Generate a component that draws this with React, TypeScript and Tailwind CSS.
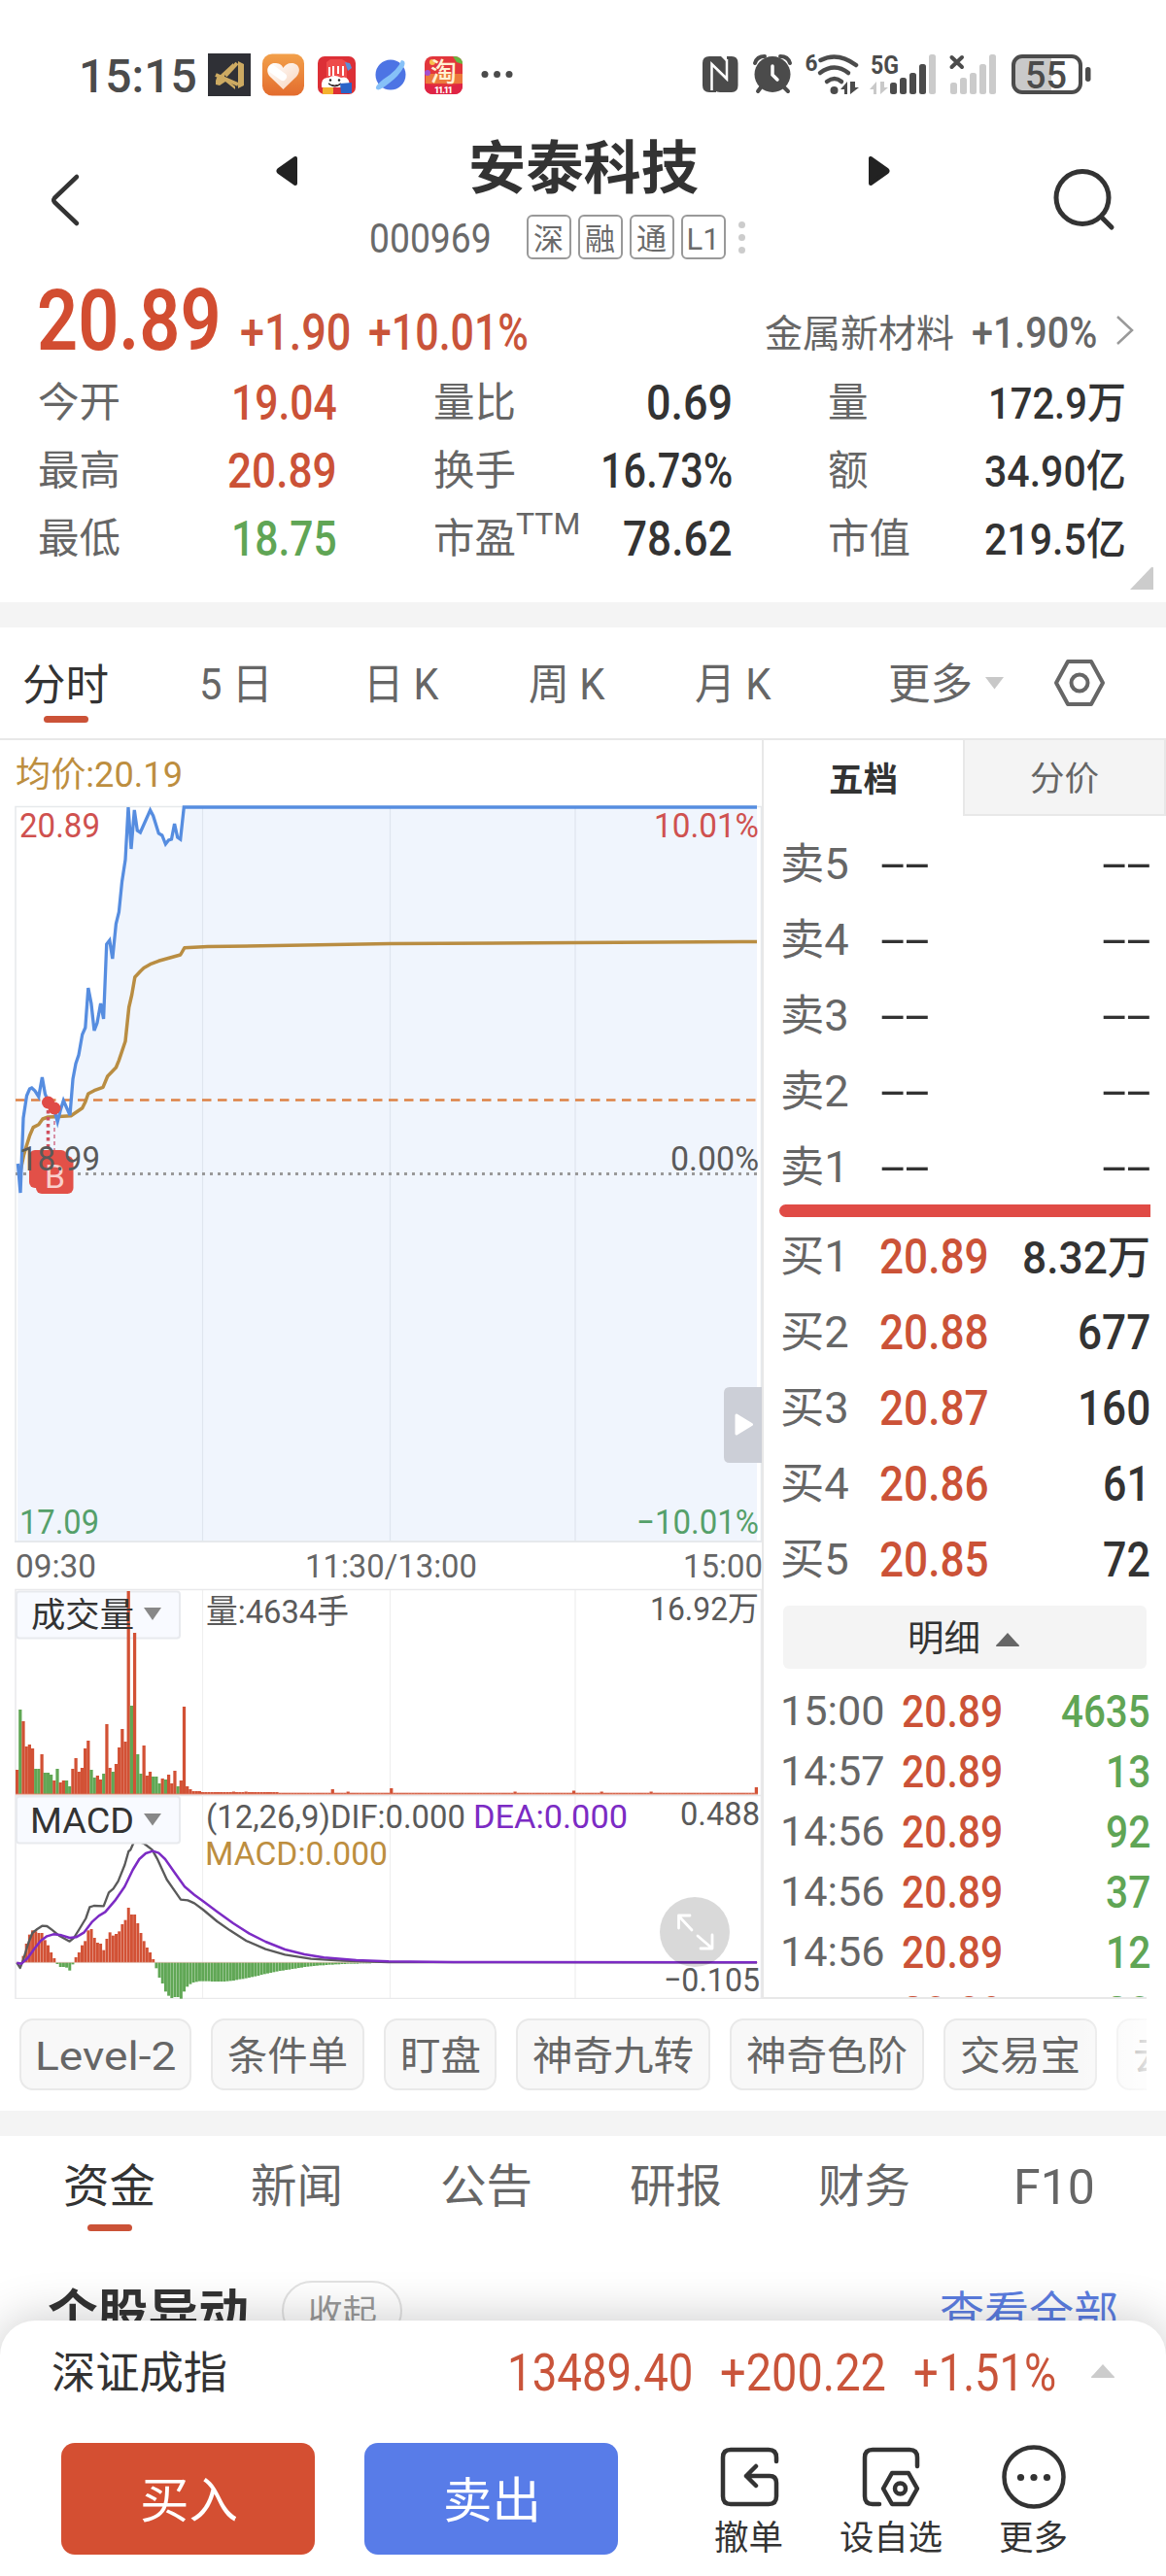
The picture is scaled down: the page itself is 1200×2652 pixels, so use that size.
import { useLayoutEffect, useRef } from 'react'
import type { ReactNode } from 'react'
import clsx from 'clsx'

type Bar = { h: number; up: boolean }

// Text squeezed or stretched to the width of its own box
function Fit({ className, children }: { className: string; children: ReactNode }) {
  const outer = useRef<HTMLSpanElement>(null)
  const inner = useRef<HTMLSpanElement>(null)

  useLayoutEffect(() => {
    if (!outer.current || !inner.current) return
    const ratio = outer.current.offsetWidth / inner.current.offsetWidth
    inner.current.style.transform = `translateY(1.5px) scaleX(${ratio})`
  }, [children])

  return (
    <span ref={outer} className={clsx('block shrink-0 whitespace-nowrap leading-none', className)}>
      <span ref={inner} className="inline-block origin-left leading-none">
        {children}
      </span>
    </span>
  )
}

const marketTags = [
  { label: '深', width: 'w-[31px]' },
  { label: '融', width: 'w-[31px]' },
  { label: '通', width: 'w-[31px]' },
  { label: 'L1', width: 'w-[34px]' },
]

const asks = ['卖5', '卖4', '卖3', '卖2', '卖1']

const bids = [
  { label: '买1', price: '20.89', qty: '8.32万', width: 'w-[132px]' },
  { label: '买2', price: '20.88', qty: '677', width: 'w-[75px]' },
  { label: '买3', price: '20.87', qty: '160', width: 'w-[75px]' },
  { label: '买4', price: '20.86', qty: '61', width: 'w-[49px]' },
  { label: '买5', price: '20.85', qty: '72', width: 'w-[49px]' },
]

const ticks = [
  { time: '15:00', price: '20.89', qty: '4635', width: 'w-[92px]' },
  { time: '14:57', price: '20.89', qty: '13', width: 'w-[46px]' },
  { time: '14:56', price: '20.89', qty: '92', width: 'w-[46px]' },
  { time: '14:56', price: '20.89', qty: '37', width: 'w-[46px]' },
  { time: '14:56', price: '20.89', qty: '12', width: 'w-[46px]' },
  { time: '14:56', price: '20.89', qty: '20', width: 'w-[46px]' },
]

const chips = [
  { label: 'Level-2', box: 'w-[177px]', text: 'w-[145px]' },
  { label: '条件单', box: 'w-[158px]', text: 'w-[124px]' },
  { label: '盯盘', box: 'w-[116px]', text: 'w-[83px]' },
  { label: '神奇九转', box: 'w-[200px]', text: 'w-[166px]' },
  { label: '神奇色阶', box: 'w-[200px]', text: 'w-[166px]' },
  { label: '交易宝', box: 'w-[158px]', text: 'w-[124px]' },
  { label: '云参数', box: 'w-[158px]', text: 'w-[124px]' },
]

const pricePoints =
  '18.4,1198 21,1228 24,1151 27.5,1128 30.5,1121 32.7,1120 36,1123 39.8,1129 43.4,1109 46.4,1126 49.5,1134 53,1141 56,1143 59.2,1155 62.2,1143 65.3,1133 68.4,1140 72,1148 75,1111 78,1095 81,1086 84.7,1065 87.8,1058 90.8,1017 93.9,1033 97,1061 100,1053 103.6,1033 106.6,1049 109.7,972 112.8,968 115.8,987 119.4,951 122.4,939 125.5,908 129,885 132,831 135,874 138.3,834 141.3,855 144.4,857 154.6,834 157.7,840 163.3,858 166.8,860 170.4,869 173.5,865 176.5,864 179.6,848 182.7,862 185.7,864 189.3,831 779,831'

const averagePoints =
  '21,1206 24.5,1189 27.5,1179 30.6,1169 34.2,1160.6 39.8,1157.7 43.9,1152 49.5,1150 56,1149.7 73,1148.8 84.7,1140.8 87.8,1134.5 90.8,1126 97,1122.7 106,1119.4 110.7,1108 119.4,1099 122.4,1091.6 129,1072 132.7,1037 135.7,1024 138.8,1006 144.4,1000 148,996.5 154.6,992.7 163.3,989.3 185.7,983 189.8,975.8 214,974.6 401.5,971.6 592,970.4 779,969.5'

const difPoints =
  '52,722 62,738 72,712 88,660 100,630 115,618 130,608 145,609 160,620 185,640 215,656 228,645 245,618 265,585 277,550 290,546 320,547 336,505 350,493 365,470 385,420 397,378 403,373 413,350 425,347 445,354 470,373 485,400 515,465 545,508 558,527 580,529 600,538 627,558 670,594 710,622 760,654 820,680 880,697 960,710 1060,716 1200,720 2337,721'

const deaPoints =
  '52,722 66,725 85,708 105,680 125,655 145,640 165,634 190,637 215,645 235,643 260,628 285,595 305,577 325,565 355,530 385,487 410,435 430,402 450,384 472,377 490,383 510,402 540,445 570,487 600,512 627,532 670,564 720,600 770,632 820,657 880,681 940,696 1000,706 1100,714 1200,718 1400,720 2337,721'

// Minute volumes, "-" marks a falling minute
const volumes = [
  25, -87, 75, 49, 51, 47, -26, -26, 41, -22, -22, -20, 14, -26, 12, 14, -14, -8, 26, 37, 23, 27, 47, 55, -25, -17, 19,
  15, -21, 72, 27, -23, 31, 48, 67, 54, 209, -91, 166, -41, -21, 50, 19, 23, -18, -18, -11, 16, -15, 20, 11, 24, -8, 14,
  90, 8, 5, 3, 3, 3,
]
const volumeSpikes: Record<number, number> = { 70: 2.5, 74: 2.5, 102: 5, 107: 2.5, 121: 6, 161: 2.5, 180: 3.5, 189: 2.5, 205: 2.5, 239: 7 }

const volumeBars: Bar[] = Array.from({ length: 240 }, (_, i) => {
  const v = volumes[i] ?? volumeSpikes[i] ?? (i < 85 ? 2 : 1.3)
  return { h: Math.abs(v), up: v > 0 }
})

const macdBars = [
  0, -5, 20, 58, 86, 99, 96, 91, 91, 69, 53, 31, 13, -5, -14, -14, -16, -25, -6, 16, 31, 53, 66, 99, 103, 76, 61, 58, 38,
  73, 93, 83, 88, 96, 118, 131, 169, 148, 148, 121, 91, 66, 46, 31, 10, -18, -47, -65, -90, -103, -110, -107, -107, -112,
  -90, -75, -67, -62, -60, -58, -58, -58, -58, -59, -59, -59, -59, -59, -58, -57, -56, -54, -52, -51, -49, -47, -45, -43,
  -41, -38, -36, -34, -32, -30, -28, -26, -25, -23, -22, -20, -19, -17, -16, -14, -13, -12, -11, -10, -9, -9, -8, -7, -7,
  -6, -6, -5, -5, -4, -4, -4, -4, -3, -3, -3, -3, -2, -2, -2, -2,
]

type LabelProps = { x: number; y: number; w: number; size?: number; fill?: string; children: string }

// y is the middle of the capitals
function Label({ x, y, w, size = 34, fill = '#5a5a5a', children }: LabelProps) {
  return (
    <text x={x} y={y + size * 0.355} fontSize={size} fill={fill} textLength={w} lengthAdjust="spacingAndGlyphs">
      {children}
    </text>
  )
}

function StatusBar() {
  return (
    <div className="flex h-[110px] items-center pt-11 text-[#4b4b4b]">
      <Fit className="ml-[81px] w-[122px] text-[48px] font-medium">15:15</Fit>
      <svg className="ml-[11px] shrink-0" width="318" height="48" viewBox="214 53 318 48">
        <defs>
          <linearGradient id="heartBg" x1="0" y1="0" x2="0" y2="1">
            <stop offset="0" stopColor="#f2a04a" />
            <stop offset="1" stopColor="#e36c2e" />
          </linearGradient>
          <linearGradient id="heart" x1="0" y1="0" x2="1" y2="1">
            <stop offset="0" stopColor="#fff" />
            <stop offset="1" stopColor="#f8d3bb" />
          </linearGradient>
        </defs>
        <rect x="214" y="55" width="44" height="44" fill="#2f3036" />
        <path d="M223 80 L227 77 L240 65 L240 68 L231 77 L231 80 L237 85 L242 89 L242 92 L232 84 L226 88 L222 87 L222 83 Z" fill="#cdaa62" />
        <path d="M245 63 L251 66 V88 L245 91 Z" fill="#cdaa62" />
        <path d="M222 77 L245 87" stroke="#cdaa62" strokeWidth="4" />
        <path d="M232 78 L244 65" stroke="#cdaa62" strokeWidth="4" />
        <rect x="270" y="55.5" width="43" height="43" rx="10" fill="url(#heartBg)" />
        <path d="M291.500 92 L278 79 C272 72 277 64 284 65 C288 65 291 68 291.500 70 C293 67 296 65 300 65 C307 65 311 72 305 79 Z" fill="url(#heart)" />
        <path d="M280 71 L291 79" stroke="#fff" strokeWidth="8" strokeLinecap="round" />
        <rect x="327" y="58" width="39" height="39" rx="7" fill="#dc2f36" />
        <path d="M336 64 L340 61 H352 L357 64 V82 H336 Z" fill="#ee4b4b" />
        <path d="M339 69 V78 M343 68 V78 M348 68 V76 M353 68 V78" stroke="#fff" strokeWidth="2" />
        <path d="M331 90 Q330 79 338 80 Q344 76 351 80 Q360 77 360 90 Z" fill="#fff" />
        <path d="M338 86 Q344 90 351 86 Q345 92 338 86" fill="#e23" stroke="#222" strokeWidth="1" />
        <circle cx="340" cy="82.500" r="1.200" fill="#222" />
        <circle cx="349" cy="82.500" r="1.200" fill="#222" />
        <rect x="332" y="90" width="11" height="7" rx="1" fill="#f4b22f" />
        <path d="M350 86 L362 85 V96 H351 Z" fill="#2a64c8" />
        <path d="M355 64 l5 1 2 5 -4 3 z" fill="#5a8fd8" />
        <circle cx="402" cy="77" r="15.500" fill="#4d74e4" />
        <path d="M388 92 Q384 90 394 82 Q410 72 413 62 Q418 62 416 68 Q411 78 400 86 Q390 94 388 92" fill="#86c1f8" />
        <rect x="437" y="58" width="39" height="39" rx="8" fill="#e2363c" />
        <path d="M438 76 H476 V86 H438 Z" fill="#ec7a3c" />
        <path d="M437 86 Q456 92 476 86 V90 Q474 97 468 97 H446 Q438 97 437 90 Z" fill="#df2445" />
        <path d="M466 58 Q476 58 476 66 L470 64 Z" fill="#66b840" />
        <circle cx="440" cy="75" r="3" fill="#a44fd0" />
        <circle cx="445" cy="64" r="3" fill="#f8bf4c" />
        <text x="443" y="84" fontSize="27" fontWeight="500" fill="#fff1d4">
          淘
        </text>
        <text x="447" y="95.500" fontSize="9" fontWeight="900" fill="#fff" textLength="19">
          11.11
        </text>
        <g fill="#4b4b4b">
          <circle cx="499" cy="76.500" r="3.500" />
          <circle cx="511.500" cy="76.500" r="3.500" />
          <circle cx="524" cy="76.500" r="3.500" />
        </g>
      </svg>
      <svg className="ml-[188px] shrink-0" width="404" height="48" viewBox="720 53 404 48" fill="#4b4b4b">
        {/* nfc */}
        <path d="M730 58 H742 L753 69 V87 L737 73 V95 H730 Q723 95 723 88 V65 Q723 58 730 58 Z" />
        <path d="M748 58 H753 Q759.500 58 759.500 65 V88 Q759.500 95 753 95 H741 Q734 95 734 87 L734 70 L749 84 Z" />
        <path d="M732.500 93 V66 L748 81 V61" fill="none" stroke="#fff" strokeWidth="2.500" />
        {/* alarm */}
        <circle cx="795" cy="76.500" r="18.500" />
        <path d="M777 65 Q779 58 787 58" fill="none" stroke="#4b4b4b" strokeWidth="4" strokeLinecap="round" />
        <path d="M803 58 Q811 58 813 65" fill="none" stroke="#4b4b4b" strokeWidth="4" strokeLinecap="round" />
        <path d="M783 90 L780 94 M807 90 L811 94" stroke="#4b4b4b" strokeWidth="4" strokeLinecap="round" />
        <path d="M795 68 V77 L800 82" fill="none" stroke="#fff" strokeWidth="3.500" strokeLinecap="round" />
        {/* wifi */}
        <text x="828.500" y="72.500" fontSize="24" fontWeight="700" textLength="13" lengthAdjust="spacingAndGlyphs">
          6
        </text>
        <g fill="none" stroke="#4b4b4b" strokeWidth="4.500" strokeLinecap="round">
          <path d="M844.500 62 Q862 53 881 67" />
          <path d="M844 75 Q859 64 873 75" />
          <path d="M851 84 Q859 78 866 84" />
        </g>
        <circle cx="858.500" cy="93" r="4" />
        <path d="M872 97 V84 L865 92 H869 V97 Z M875 84 V97 L884 90 H880 V84 Z" />
        {/* signals */}
        <text x="896" y="76" fontSize="26" fontWeight="700" textLength="29" lengthAdjust="spacingAndGlyphs">
          5G
        </text>
        <path d="M902 97 V84 L895 92 H899 V97 Z M906 84 V97 L914 90 H910 V84 Z" fill="#c9c9c9" />
        <rect x="916" y="85" width="7" height="12" rx="2.500" />
        <rect x="926" y="80" width="7" height="17" rx="2.500" />
        <rect x="936" y="75" width="7" height="22" rx="2.500" />
        <rect x="946" y="66" width="7" height="31" rx="2.500" />
        <g fill="#cbcbcb">
          <rect x="956" y="56" width="7" height="41" rx="2.500" />
          <rect x="978" y="85" width="7" height="12" rx="2.500" />
          <rect x="988" y="80" width="7" height="17" rx="2.500" />
          <rect x="998" y="75" width="7" height="22" rx="2.500" />
          <rect x="1008" y="66" width="7" height="31" rx="2.500" />
          <rect x="1018" y="56" width="7" height="41" rx="2.500" />
        </g>
        <path d="M979.500 59 L990 69 M990 59 L979.500 69" stroke="#4b4b4b" strokeWidth="4" strokeLinecap="round" />
        {/* battery */}
        <path d="M1052 58 H1082 V95 H1052 Q1043 95 1043 87 V66 Q1043 58 1052 58" fill="#c9c9c9" />
        <rect x="1043" y="58" width="69" height="37" rx="9" fill="none" stroke="#4b4b4b" strokeWidth="4" />
        <text x="1055" y="91" fontSize="38" fontWeight="500" textLength="43" lengthAdjust="spacingAndGlyphs">
          55
        </text>
        <rect x="1117" y="69" width="5.500" height="15" rx="2.700" />
      </svg>
    </div>
  )
}

function Header() {
  return (
    <header className="flex h-[170px] text-[#333]">
      <svg className="mt-[66px] ml-[48px] shrink-0" width="40" height="60" fill="none" stroke="#333" strokeWidth="4.500" strokeLinecap="round" strokeLinejoin="round">
        <path d="M31 6 L8 28 Q6.500 30 8 32 L31 54" />
      </svg>
      <div className="flex flex-1 flex-col items-center">
        <div className="mt-[32px] ml-[32px] flex items-center">
          <svg className="mt-2 shrink-0" width="24" height="30">
            <path d="M20 2 V28 L3 16 Q2 15 3 14 Z" fill="#222" stroke="#222" strokeWidth="4" strokeLinejoin="round" />
          </svg>
          <Fit className="mr-[173px] ml-[174px] w-[237px] text-[59px] font-bold">安泰科技</Fit>
          <svg className="mt-2 shrink-0" width="24" height="30">
            <path d="M4 2 V28 L21 16 Q22 15 21 14 Z" fill="#222" stroke="#222" strokeWidth="4" strokeLinejoin="round" />
          </svg>
        </div>
        <div className="mt-[20px] ml-[-22px] flex items-center gap-[7px] text-[#6a6a6a]">
          <Fit className="mr-[29px] w-[126px] text-[42px]">000969</Fit>
          {marketTags.map((tag) => (
            <span key={tag.label} className="flex size-[46px] items-center justify-center rounded-md border-2 border-[#999] text-[31px]">
              <Fit className={tag.width}>{tag.label}</Fit>
            </span>
          ))}
          <span className="ml-[6px] flex flex-col gap-[6px]">
            <i className="size-[7px] rounded-full bg-[#ccc]" />
            <i className="size-[7px] rounded-full bg-[#ccc]" />
            <i className="size-[7px] rounded-full bg-[#ccc]" />
          </span>
        </div>
      </div>
      <svg className="mt-[60px] mr-[48px] shrink-0" width="72" height="70" fill="none" stroke="#333" strokeWidth="5" strokeLinecap="round">
        <circle cx="34" cy="33.500" r="27" />
        <path d="M54 54 L64 64" />
      </svg>
    </header>
  )
}

function Quote() {
  return (
    <section className="relative h-[340px] text-[#666]">
      <div className="flex h-[96px] items-center">
        <Fit className="ml-[38px] w-[190px] text-[87px] font-semibold text-[#d24d31]">20.89</Fit>
        <Fit className="mt-6 ml-[19px] w-[114px] text-[51px] font-medium text-[#c9543a]">+1.90</Fit>
        <Fit className="mt-6 ml-[18px] w-[165px] text-[51px] font-medium text-[#c9543a]">+10.01%</Fit>
        <Fit className="mt-7 ml-auto w-[195px] text-[39px]">金属新材料</Fit>
        <Fit className="mt-6 ml-[18px] w-[129px] text-[45px] font-medium">+1.90%</Fit>
        <svg className="mt-6 mr-[30px] ml-[17px] shrink-0" width="24" height="36" fill="none" stroke="#999" strokeWidth="2.500">
          <path d="M4 4 L19 18 L4 32" />
        </svg>
      </div>
      <div className="mt-0.5 flex flex-col pl-[39px] text-[42.500px]">
        <div className="flex h-[70px] items-center">
          <Fit className="w-[85px]">今开</Fit>
          <Fit className="ml-[114px] w-[109px] text-[50px] font-medium text-[#cb5237]">19.04</Fit>
          <Fit className="ml-[99px] w-[85px]">量比</Fit>
          <Fit className="ml-[134px] w-[89px] text-[50px] font-medium text-[#333]">0.69</Fit>
          <Fit className="ml-[98px] w-[42px]">量</Fit>
          <Fit className="ml-[123px] w-[142px] text-[45px] font-medium text-[#333]">172.9万</Fit>
        </div>
        <div className="flex h-[70px] items-center">
          <Fit className="w-[85px]">最高</Fit>
          <Fit className="ml-[110px] w-[113px] text-[50px] font-medium text-[#cb5237]">20.89</Fit>
          <Fit className="ml-[99px] w-[85px]">换手</Fit>
          <Fit className="ml-[87px] w-[136px] text-[50px] font-medium text-[#333]">16.73%</Fit>
          <Fit className="ml-[98px] w-[42px]">额</Fit>
          <Fit className="ml-[119px] w-[146px] text-[45px] font-medium text-[#333]">34.90亿</Fit>
        </div>
        <div className="flex h-[70px] items-center">
          <Fit className="w-[85px]">最低</Fit>
          <Fit className="ml-[114px] w-[109px] text-[50px] font-medium text-[#60a555]">18.75</Fit>
          <Fit className="ml-[99px] w-[85px]">市盈</Fit>
          <Fit className="mb-8 w-[66px] text-[32px]">TTM</Fit>
          <Fit className="ml-[44px] w-[113px] text-[50px] font-medium text-[#333]">78.62</Fit>
          <Fit className="ml-[98px] w-[85px]">市值</Fit>
          <Fit className="ml-[76px] w-[146px] text-[45px] font-medium text-[#333]">219.5亿</Fit>
        </div>
      </div>
      <svg className="absolute right-[13px] bottom-[13px]" width="24" height="24">
        <path d="M0 24 L22 1 Q24 0 24 2 V24 Z" fill="#ccc" />
      </svg>
    </section>
  )
}

function PeriodTabs() {
  return (
    <nav className="flex h-[116px] items-center border-b-2 border-[#e8e8e8] text-[44px] text-[#666]">
      <div className="ml-[23px] flex h-full flex-col items-center pt-[36px] text-[#333]">
        <Fit className="w-[89px]">分时</Fit>
        <i className="mt-[11px] h-[7px] w-[46px] rounded-full bg-[#cb5237]" />
      </div>
      <Fit className="ml-[93px] w-[76px]">5 日</Fit>
      <Fit className="ml-[93px] w-[78px]">日 K</Fit>
      <Fit className="ml-[92px] w-[79px]">周 K</Fit>
      <Fit className="ml-[92px] w-[79px]">月 K</Fit>
      <Fit className="ml-[120px] w-[87px]">更多</Fit>
      <svg className="ml-[13px] shrink-0" width="20" height="13">
        <path d="M0 0 H19 L9.500 12.500 Z" fill="#c8c8c8" />
      </svg>
      <svg className="ml-[50px] shrink-0" width="54" height="50" fill="none" stroke="#666" strokeWidth="4" strokeLinejoin="round">
        <path d="M15 3 H39 L51 25 L39 47 H15 L3 25 Z" />
        <circle cx="27" cy="25" r="8.500" />
      </svg>
    </nav>
  )
}

function Charts() {
  const step = 3.183
  return (
    <svg className="shrink-0" width="784" height="1296" viewBox="0 762 784 1296">
      {/* intraday price */}
      <Label x={16} y={797} w={172} size={36} fill="#bd8e3f">
        均价:20.19
      </Label>
      <path d="M16 1587 V830.500 H783.500 V1587" fill="none" stroke="#e6e9ec" strokeWidth="1.500" />
      <polygon points={`18,1586 ${pricePoints} 779,1586`} fill="#f0f5fd" />
      <path d="M208.500 831 V1587 M401.500 831 V1587 M592 831 V1587" stroke="#dfe5ee" strokeWidth="1.200" />
      <path d="M15 1587 H784" stroke="#e6e9ec" strokeWidth="2" />
      <path d="M16 1208.500 H784" stroke="#999" strokeWidth="3" strokeDasharray="3 5" />
      <path d="M16 1132.500 H784" stroke="#dd8144" strokeWidth="2.500" strokeDasharray="9.500 6.500" />
      <polyline points={averagePoints} fill="none" stroke="#b98d42" strokeWidth="3.500" strokeLinejoin="round" />
      <polyline points={pricePoints} fill="none" stroke="#568de0" strokeWidth="3.300" />
      <Label x={20} y={850} w={83} size={35} fill="#cf514f">
        20.89
      </Label>
      <Label x={673} y={850} w={108} size={35} fill="#cf514f">
        10.01%
      </Label>
      <Label x={690} y={1193} w={91} size={35}>
        0.00%
      </Label>
      <Label x={20} y={1567} w={82} size={35} fill="#55a06a">
        17.09
      </Label>
      <Label x={655} y={1567} w={126} size={35} fill="#55a06a">
        −10.01%
      </Label>
      {/* trade markers */}
      <path d="M49.500 1143 V1184" stroke="#d0505f" strokeWidth="3.500" strokeDasharray="3.500 3.500" />
      <path d="M56 1154 V1190" stroke="#d0708a" strokeWidth="1.500" strokeDasharray="4 3" />
      <circle cx="49.500" cy="1135" r="6.500" fill="#e04b46" />
      <circle cx="56" cy="1141" r="6.500" fill="#e04b46" />
      <rect x="30" y="1184" width="39" height="39" rx="6" fill="#e25048" />
      <rect x="37" y="1190" width="38.500" height="39" rx="6" fill="#e25048" />
      <Label x={46} y={1210.500} w={21} size={34} fill="#f9cfcc">
        B
      </Label>
      <Label x={20} y={1193} w={83} size={35}>
        18.99
      </Label>
      <path d="M784 1428 H751 Q745 1428 745 1434 V1500 Q745 1506 751 1506 H784 Z" fill="#cccfd7" />
      <path d="M758 1457 V1476 L773.500 1466.500 Z" fill="#fff" stroke="#fff" strokeWidth="3" strokeLinejoin="round" />
      <Label x={16} y={1612} w={83} fill="#666">
        09:30
      </Label>
      <Label x={314} y={1612} w={177} fill="#666">
        11:30/13:00
      </Label>
      <Label x={703} y={1612} w={82} fill="#666">
        15:00
      </Label>

      {/* panel frames */}
      <path d="M16 1636.500 H783.500 V2057.500 H16 Z M16 1848.500 H784" fill="none" stroke="#e9e9eb" strokeWidth="1.500" />
      <path d="M208.500 1637 V2057 M401.500 1637 V2057 M592 1637 V2057" stroke="#efefef" strokeWidth="1.200" />
      <rect x="17" y="1638.500" width="168" height="48" rx="3" fill="#f8faff" stroke="#e8eaee" strokeWidth="2" />

      {/* volume */}
      {volumeBars.map((bar, i) => (
        <rect key={i} x={16 + i * step} y={1847 - bar.h} width={3.25} height={bar.h} fill={bar.up ? '#d25135' : '#60a755'} />
      ))}
      <path d="M16 1847 H780" stroke="#dd8069" strokeWidth="1" />
      <Label x={32} y={1663} w={106} size={35} fill="#333">
        成交量
      </Label>
      <path d="M148 1655 H166 L157 1668 Z" fill="#888" />
      <Label x={212} y={1659} w={147}>
        量:4634手
      </Label>
      <Label x={669} y={1656} w={112}>
        16.92万
      </Label>

      {/* macd */}
      <g transform="translate(0 1780) scale(0.33333)">
        {macdBars.map((v, i) => (
          <rect key={i} x={48.5 + i * 9.55} y={v > 0 ? 721 - v : 721} width={8.9} height={Math.abs(v)} fill={v > 0 ? '#d25135' : '#60a755'} />
        ))}
        <path d="M48 721 H2340" stroke="#d9b0a0" strokeWidth="2" />
        <polyline points={difPoints} fill="none" stroke="#5a5a5a" strokeWidth="7" strokeLinejoin="round" />
        <polyline points={deaPoints} fill="none" stroke="#7c2bc4" strokeWidth="7.500" strokeLinejoin="round" />
      </g>
      <rect x="17" y="1849.500" width="168" height="48" rx="3" fill="#f8faff" stroke="#e8eaee" strokeWidth="2" />
      <Label x={31} y={1874} w={107} size={36} fill="#333">
        MACD
      </Label>
      <path d="M148 1867 H166 L157 1879.500 Z" fill="#888" />
      <Label x={212} y={1869.500} w={267}>
        (12,26,9)DIF:0.000
      </Label>
      <Label x={487} y={1869.500} w={159} fill="#7c2bc4">
        DEA:0.000
      </Label>
      <Label x={211} y={1908} w={188} fill="#bd8e3f">
        MACD:0.000
      </Label>
      <Label x={700} y={1867} w={82}>
        0.488
      </Label>
      <Label x={683} y={2038} w={99}>
        −0.105
      </Label>
      <circle cx="715" cy="1989" r="36" fill="#000" fillOpacity="0.150" />
      <g fill="none" stroke="#fff" strokeWidth="2.800" strokeLinecap="round" strokeLinejoin="round">
        <path d="M712 1987 L699 1973 M698.500 1985 V1972 H710" />
        <path d="M718 1993 L732 2005 M733 1992 V2006 H721" />
      </g>
    </svg>
  )
}

function OrderBook() {
  return (
    <aside className="flex w-[416px] flex-col overflow-hidden border-l-2 border-[#e8e8e8] text-[44px] text-[#666]">
      <div className="flex h-[78px] shrink-0 text-[35px]">
        <div className="flex w-[205px] items-center justify-center font-bold text-[#333]">
          <Fit className="w-[71px]">五档</Fit>
        </div>
        <div className="flex flex-1 items-center justify-center border-2 border-t-0 border-[#e8e8e8] bg-[#f4f4f4]">
          <Fit className="w-[71px]">分价</Fit>
        </div>
      </div>
      <div className="mt-[9px] flex flex-col">
        {asks.map((label) => (
          <div key={label} className="flex h-[78px] items-center">
            <Fit className="ml-[17px] w-[71px]">{label}</Fit>
            <Fit className="ml-[32px] w-[50px] text-[#333]">--</Fit>
            <Fit className="mr-[16px] ml-auto w-[50px] text-[#333]">--</Fit>
          </div>
        ))}
      </div>
      <div className="mt-px ml-[16px] h-[13px] w-[382px] shrink-0 rounded-l-full bg-[#e04b46]" />
      <div className="flex flex-col">
        {bids.map((bid) => (
          <div key={bid.label} className="flex h-[78px] items-center">
            <Fit className="ml-[17px] w-[71px]">{bid.label}</Fit>
            <Fit className="ml-[31px] w-[113px] text-[50px] font-medium text-[#cb5237]">{bid.price}</Fit>
            <Fit className={clsx('mr-[16px] ml-auto font-medium text-[#333]', bid.width, bid.qty.endsWith('万') ? 'text-[47px]' : 'text-[50px]')}>
              {bid.qty}
            </Fit>
          </div>
        ))}
      </div>
      <div className="mt-[10px] ml-[20px] flex h-[65px] w-[374px] shrink-0 items-center rounded-md bg-[#f4f4f4] pl-[128px] text-[#333]">
        <Fit className="w-[75px] text-[37px]">明细</Fit>
        <svg className="mt-1 ml-[16px]" width="24" height="14">
          <path d="M0 14 Q0 12 2 11 L12 0 L22 11 Q24 12 24 14 Z" fill="#666" />
        </svg>
      </div>
      <div className="flex h-[338px] shrink-0 flex-col overflow-hidden pt-[11px]">
        {ticks.map((tick, i) => (
          <div key={i} className="flex h-[62px] shrink-0 items-center">
            <Fit className="ml-[17px] w-[108px] text-[42px]">{tick.time}</Fit>
            <Fit className="ml-[17px] w-[104px] text-[46px] font-medium text-[#cb5237]">{tick.price}</Fit>
            <Fit className={clsx('mr-[16px] ml-auto text-[46px] font-medium text-[#60a555]', tick.width)}>{tick.qty}</Fit>
          </div>
        ))}
      </div>
      <div className="h-[2px] w-[394px] shrink-0 bg-[#e8e8e8]" />
    </aside>
  )
}

function Chips() {
  return (
    <div className="relative flex h-[115px] w-[1180px] gap-5 overflow-hidden pt-5 pl-5 text-[41px] text-[#666]">
      {chips.map((chip) => (
        <div key={chip.label} className={clsx('flex h-[74px] shrink-0 items-center justify-center rounded-[14px] border-2 border-[#e9e9e9] bg-[#f8f8f8]', chip.box)}>
          <Fit className={chip.text}>{chip.label}</Fit>
        </div>
      ))}
      <div className="absolute inset-y-0 right-0 w-[70px] bg-gradient-to-r from-white/0 to-white/80" />
    </div>
  )
}

function News() {
  return (
    <section className="flex-1 text-[#666]">
      <nav className="flex pt-[26px] text-[47px]">
        <div className="ml-[65px] flex flex-col items-center text-[#333]">
          <Fit className="w-[95px]">资金</Fit>
          <i className="mt-[18px] h-[7px] w-[46px] rounded-full bg-[#cb5237]" />
        </div>
        <Fit className="ml-[98px] w-[95px]">新闻</Fit>
        <Fit className="ml-[100px] w-[95px]">公告</Fit>
        <Fit className="ml-[100px] w-[95px]">研报</Fit>
        <Fit className="ml-[99px] w-[95px]">财务</Fit>
        <Fit className="ml-[106px] w-[84px] text-[50px]">F10</Fit>
      </nav>
      <div className="mt-[51px] flex items-center">
        <Fit className="ml-[49px] w-[207px] text-[51px] font-bold text-[#333]">个股异动</Fit>
        <span className="ml-[34px] flex h-[62px] w-[124px] items-center justify-center rounded-full border-2 border-[#e2e2e2] text-[#999]">
          <Fit className="w-[71px] text-[35px]">收起</Fit>
        </span>
        <Fit className="mr-[49px] ml-auto w-[184px] text-[46px] text-[#5b7de0]">查看全部</Fit>
      </div>
    </section>
  )
}

function TradeSheet() {
  return (
    <footer className="absolute inset-x-0 bottom-0 h-[263px] rounded-t-[36px] bg-white text-[#333] shadow-[0_0_50px_rgba(0,0,0,0.22)]">
      <div className="flex h-[104px] items-center text-[#c9543a]">
        <Fit className="ml-[53px] w-[181px] text-[45px] text-[#333]">深证成指</Fit>
        <Fit className="ml-[288px] w-[191px] text-[53px]">13489.40</Fit>
        <Fit className="ml-[28px] w-[171px] text-[53px]">+200.22</Fit>
        <Fit className="ml-[28px] w-[147px] text-[53px]">+1.51%</Fit>
        <svg className="ml-[36px] shrink-0" width="24" height="14">
          <path d="M0 14 Q0 12 2 11 L12 0 L22 11 Q24 12 24 14 Z" fill="#ccc" />
        </svg>
      </div>
      <div className="flex pt-[22px] text-[35px]">
        <button type="button" className="ml-[63px] flex h-[115px] w-[261px] items-center justify-center rounded-[14px] bg-[#d44f32] text-[50px] text-white">
          <Fit className="w-[101px]">买入</Fit>
        </button>
        <button type="button" className="ml-[51px] flex h-[115px] w-[261px] items-center justify-center rounded-[14px] bg-[#587ce8] text-[50px] text-white">
          <Fit className="w-[101px]">卖出</Fit>
        </button>
        <div className="ml-[99px] flex w-[71px] flex-col items-center">
          <svg width="68" height="70" viewBox="737 2515 68 70" fill="none" stroke="#333" strokeWidth="4.500" strokeLinecap="round" strokeLinejoin="round">
            <path d="M799 2534 V2530 Q799 2522 791 2522 H752 Q744 2522 744 2530 V2570 Q744 2578 752 2578 H791 Q799 2578 799 2570 V2556 Q799 2549 792 2549 H768 M778 2539 L768 2549 L778 2559" />
          </svg>
          <Fit className="mt-[9px] w-[71px]">撤单</Fit>
        </div>
        <div className="ml-[58px] flex w-[106px] flex-col items-center">
          <svg width="68" height="70" viewBox="883 2515 68 70" fill="none" stroke="#333" strokeWidth="4.500" strokeLinecap="round" strokeLinejoin="round">
            <path d="M944 2539 V2530 Q944 2522 936 2522 H898 Q890 2522 890 2530 V2570 Q890 2578 898 2578 H905" />
            <path d="M918 2546 H935 L944 2562 L935 2578 H918 L909 2562 Z" />
            <circle cx="926.500" cy="2562" r="5.500" />
          </svg>
          <Fit className="mt-[9px] w-[106px]">设自选</Fit>
        </div>
        <div className="ml-[58px] flex w-[71px] flex-col items-center">
          <svg width="70" height="70">
            <circle cx="35" cy="35" r="30.500" fill="none" stroke="#333" strokeWidth="4.500" />
            <g fill="#333">
              <circle cx="21.500" cy="35.500" r="3.600" />
              <circle cx="35" cy="35.500" r="3.600" />
              <circle cx="48.500" cy="35.500" r="3.600" />
            </g>
          </svg>
          <Fit className="mt-[9px] w-[71px]">更多</Fit>
        </div>
      </div>
    </footer>
  )
}

export default function App() {
  return (
    <main className="relative flex h-[2652px] w-[1200px] flex-col overflow-hidden bg-white font-[family-name:Roboto,'Noto_Sans_CJK_SC',sans-serif]">
      <StatusBar />
      <Header />
      <Quote />
      <div className="h-[26px] shrink-0 bg-[#f4f4f4]" />
      <PeriodTabs />
      <div className="flex h-[1296px] shrink-0">
        <Charts />
        <OrderBook />
      </div>
      <Chips />
      <div className="h-[26px] shrink-0 bg-[#f4f4f4]" />
      <News />
      <TradeSheet />
    </main>
  )
}
